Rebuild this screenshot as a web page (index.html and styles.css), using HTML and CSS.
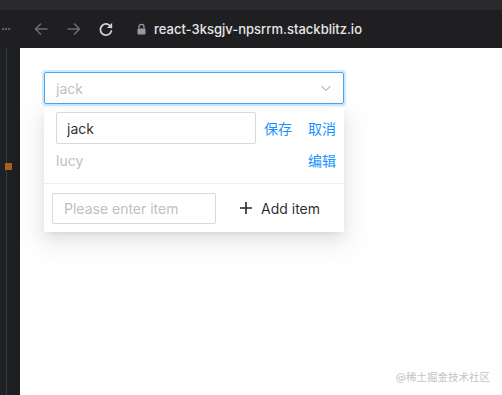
FILE: index.html
```html
<!DOCTYPE html>
<html lang="zh">
<head>
  <meta charset="UTF-8">
  <meta name="viewport" content="width=device-width, initial-scale=1.0">
  <title>select</title>
  <link rel="stylesheet" href="styles.css">
</head>
<body>
  <div class="toolbar">
    <div class="tabstrip"></div>
    <div class="navbar">
      <span class="dots">···</span>
      <svg class="nav_icon" width="16" height="16" viewBox="0 0 16 16"><path d="M14 8H2.5M7.5 3L2.5 8l5 5" fill="none" stroke="#6c6c70" stroke-width="1.6" stroke-linecap="round" stroke-linejoin="round"/></svg>
      <svg class="nav_icon" width="16" height="16" viewBox="0 0 16 16"><path d="M2 8h11.5M8.5 3l5 5-5 5" fill="none" stroke="#6c6c70" stroke-width="1.6" stroke-linecap="round" stroke-linejoin="round"/></svg>
      <svg class="nav_icon" width="16" height="16" viewBox="0 0 16 16"><path d="M13.2 6.5A5.6 5.6 0 1 0 13.4 10" fill="none" stroke="#d0d0d3" stroke-width="1.8" stroke-linecap="round"/><path d="M14.2 1.8v5.2H9z" fill="#d0d0d3"/></svg>
      <svg class="lock" width="9" height="12" viewBox="0 0 9 12"><path d="M2 5.5V3.8a2.5 2.5 0 0 1 5 0v1.7" fill="none" stroke="#9a9a9e" stroke-width="1.3"/><rect x="0.5" y="5.5" width="8" height="6" rx="1" fill="#9a9a9e"/></svg>
      <span class="url">react-3ksgjv-npsrrm.stackblitz.io</span>
    </div>
  </div>
  <div class="main">
    <div class="sidebar">
      <div class="mark"></div>
    </div>
    <div class="content">
      <div class="select">
        <span class="select_value">jack</span>
        <svg class="select_arrow" width="12" height="12" viewBox="0 0 12 12"><path d="M1.5 4l4.5 4.5L10.5 4" fill="none" stroke="#bfbfbf" stroke-width="1.1"/></svg>
      </div>
      <div class="dropdown">
        <div class="option editing">
          <input class="field edit_field" type="text" value="jack">
          <a class="link">保存</a>
          <a class="link">取消</a>
        </div>
        <div class="option">
          <span class="option_label">lucy</span>
          <a class="link">编辑</a>
        </div>
        <div class="divider"></div>
        <div class="add_row">
          <input class="field add_field" type="text" placeholder="Please enter item">
          <button class="add_btn">
            <svg width="14" height="14" viewBox="0 0 14 14"><path d="M7 1v12M1 7h12" stroke="#000" stroke-opacity=".85" stroke-width="1.6"/></svg>
            <span>Add item</span>
          </button>
        </div>
      </div>
      <div class="watermark">@稀土掘金技术社区</div>
    </div>
  </div>
</body>
</html>
```

FILE: styles.css
```css
*{
  margin: 0;
  padding: 0;
  box-sizing: border-box;
}

html, body{
  height: 100%;
}

body{
  font-family: "Inter", "Noto Sans CJK SC", sans-serif;
  font-size: 14px;
  color: rgba(0, 0, 0, .85);
  display: flex;
  flex-direction: column;
  overflow: hidden;
}

/* browser chrome */
.toolbar{
  height: 48px;
  background-color: #1f1f22;
}

.toolbar > .tabstrip{
  height: 10px;
  background-color: #2a2a2d;
}

.toolbar > .navbar{
  height: 38px;
  display: flex;
  align-items: center;
  padding-bottom: 1px;
}

.navbar > .dots{
  width: 33px;
  color: #8a8a8e;
  font-size: 14px;
  letter-spacing: -1px;
  padding-left: 1px;
}

.navbar > .nav_icon{
  margin-right: 17px;
}

.navbar > .nav_icon:nth-of-type(3){
  margin-left: -1px;
  margin-right: 23px;
}

.navbar > .lock{
  margin-right: 8px;
}

.navbar > .url{
  color: #e6e6e8;
  font-size: 13px;
  font-weight: 500;
}

/* page */
.main{
  flex: 1;
  display: flex;
}

.main > .sidebar{
  width: 20px;
  background-color: #1d1e22;
  border-left: 6px solid #1f2024;
  position: relative;
}

.sidebar::before{
  content: "";
  position: absolute;
  left: 0;
  top: 0;
  bottom: 0;
  width: 1px;
  background-color: #3a3b3f;
}

.sidebar > .mark{
  position: absolute;
  left: -1px;
  top: 115px;
  width: 7px;
  height: 7px;
  background-color: #a9601f;
}

.main > .content{
  flex: 1;
  background-color: #fff;
  padding: 24px 0 0 24px;
  position: relative;
}

.select{
  width: 300px;
  height: 32px;
  border: 1px solid #40a9ff;
  border-radius: 2px;
  box-shadow: 0 0 0 2px rgba(24, 144, 255, .2);
  display: flex;
  align-items: center;
  justify-content: space-between;
  padding: 0 11px;
}

.select > .select_value{
  color: #bfbfbf;
}

.dropdown{
  width: 300px;
  margin-top: 4px;
  padding: 4px 0 8px;
  background-color: #fff;
  border-radius: 2px;
  box-shadow: 0 3px 6px -4px rgba(0, 0, 0, .12), 0 6px 16px 0 rgba(0, 0, 0, .08), 0 9px 28px 8px rgba(0, 0, 0, .05);
}

.dropdown > .option{
  display: flex;
  align-items: center;
  padding: 0 8px 0 12px;
  height: 24px;
  margin-top: 4px;
}

.dropdown > .option.editing{
  height: 32px;
  margin-top: 0;
}

.option > .option_label{
  flex: 1;
  color: #bfbfbf;
}

.link{
  color: #1890ff;
  cursor: pointer;
}

.option > .link + .link{
  margin-left: 16px;
}

.option.editing > .field + .link{
  margin-left: 8px;
}

.option > .option_label + .link{
  margin-left: auto;
}

.field{
  height: 32px;
  border: 1px solid #d9d9d9;
  border-radius: 2px;
  padding: 4px 11px;
  font-family: inherit;
  font-size: 14px;
  color: rgba(0, 0, 0, .85);
  outline: none;
}

.field::placeholder{
  color: #bfbfbf;
}

.edit_field{
  width: 200px;
  padding-left: 10px;
}

.dropdown > .divider{
  height: 1px;
  background-color: #f0f0f0;
  margin: 11px 0 8px;
}

.dropdown > .add_row{
  display: flex;
  align-items: center;
  padding: 0 8px;
}

.add_field{
  width: 164px;
  height: 31px;
}

.add_btn{
  margin-left: 8px;
  height: 32px;
  padding: 4px 15px;
  border: none;
  background: transparent;
  display: flex;
  align-items: center;
  gap: 8px;
  font-family: inherit;
  font-size: 14px;
  color: rgba(0, 0, 0, .85);
  cursor: pointer;
}

.content > .watermark{
  position: absolute;
  right: 12px;
  bottom: 11px;
  font-size: 10.5px;
  color: #c4c4c4;
}
```
